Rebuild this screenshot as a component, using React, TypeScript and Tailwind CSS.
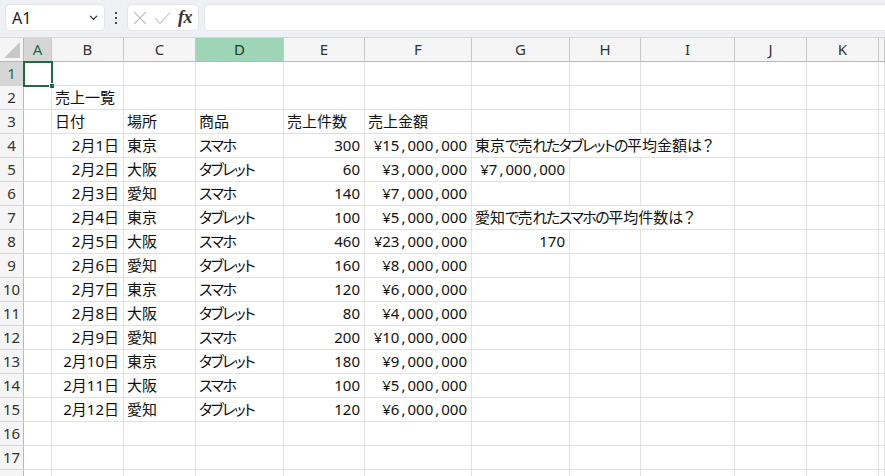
import React from 'react';

const COLS = ['A', 'B', 'C', 'D', 'E', 'F', 'G', 'H', 'I', 'J', 'K', ''];

type Row = { b?: string; c?: string; d?: string; e?: string; f?: string; g?: string; gRight?: boolean; overflow?: boolean };

const DATA: [string, string, string, string, string][] = [
  ['2月1日', '東京', 'スマホ', '300', '¥15,000,000'],
  ['2月2日', '大阪', 'タブレット', '60', '¥3,000,000'],
  ['2月3日', '愛知', 'スマホ', '140', '¥7,000,000'],
  ['2月4日', '東京', 'タブレット', '100', '¥5,000,000'],
  ['2月5日', '大阪', 'スマホ', '460', '¥23,000,000'],
  ['2月6日', '愛知', 'タブレット', '160', '¥8,000,000'],
  ['2月7日', '東京', 'スマホ', '120', '¥6,000,000'],
  ['2月8日', '大阪', 'タブレット', '80', '¥4,000,000'],
  ['2月9日', '愛知', 'スマホ', '200', '¥10,000,000'],
  ['2月10日', '東京', 'タブレット', '180', '¥9,000,000'],
  ['2月11日', '大阪', 'スマホ', '100', '¥5,000,000'],
  ['2月12日', '愛知', 'タブレット', '120', '¥6,000,000']
];

// G列のメモ（行番号をキーに）
const NOTES: Record<number, { g: string; right?: boolean; overflow?: boolean }> = {
  4: { g: '東京で売れたタブレットの平均金額は？', overflow: true },
  5: { g: '¥7,000,000', right: true },
  7: { g: '愛知で売れたスマホの平均件数は？', overflow: true },
  8: { g: '170', right: true }
};

function buildRows(): Row[] {
  const rows: Row[] = [];
  for (let i = 1; i <= 18; i++) {
    const r: Row = {};
    if (i === 2) r.b = '売上一覧';
    if (i === 3) {
      r.b = '日付';
      r.c = '場所';
      r.d = '商品';
      r.e = '売上件数';
      r.f = '売上金額';
    }
    if (i >= 4 && i <= 15) {
      const [b, c, d, e, f] = DATA[i - 4];
      Object.assign(r, { b, c, d, e, f });
    }
    const note = NOTES[i];
    if (note) {
      r.g = note.g;
      r.gRight = note.right;
      r.overflow = note.overflow;
    }
    rows.push(r);
  }
  return rows;
}

// かなは詰め気味、カンマは広めに（Excelの游ゴシック風）
function renderText(t: string) {
  return t.split(/([\u3040-\u30ff]+|,|？)/).map((part, i) => {
    if (!part) return null;
    if (part === ',') {
      return (
        <span key={i} className="mx-[2px]">
          ,
        </span>
      );
    }
    if (part === '？') {
      return (
        <span key={i} className="[font-feature-settings:normal]">
          ？
        </span>
      );
    }
    if (/^[\u3040-\u30ff]+$/.test(part)) {
      return (
        <span key={i} className="tracking-[-1.5px]">
          {part}
        </span>
      );
    }
    return <React.Fragment key={i}>{part}</React.Fragment>;
  });
}

function Cell({ text, right, noBorder }: { text?: string; right?: boolean; noBorder?: boolean }) {
  return (
    <div
      className={`relative h-[24px] flex items-center border-b border-[#e1e1e1] ${noBorder ? '' : 'border-r'} ${
        right ? 'justify-end pr-[4px]' : 'justify-start pl-[3px]'
      }`}>
      {text && <span className="whitespace-nowrap leading-none relative z-10">{renderText(text)}</span>}
    </div>
  );
}

function FormulaBar() {
  return (
    <div className="h-[38px] bg-[#eef0f3] border-b border-[#d6d8db] flex items-start pt-[4px] pl-[5px]">
      {/* 名前ボックス */}
      <div className="w-[100px] h-[27px] bg-white rounded-[5px] border border-[#e3e5e8] flex items-center justify-between pl-[6px] pr-[5px]">
        <span className="text-[16px] text-[#222] font-['Noto_Sans',sans-serif]">A1</span>
        <svg width="11" height="11" viewBox="0 0 12 12">
          <path d="M2.5 4.5 L6 8 L9.5 4.5" fill="none" stroke="#333" strokeWidth="1.4" strokeLinecap="round" strokeLinejoin="round" />
        </svg>
      </div>
      <div className="w-[22px] h-[27px] flex flex-col items-center justify-center gap-[3px]">
        <span className="block w-[2px] h-[2px] bg-[#444]" />
        <span className="block w-[2px] h-[2px] bg-[#444]" />
        <span className="block w-[2px] h-[2px] bg-[#444]" />
      </div>
      {/* ×✓fx */}
      <div className="w-[72px] h-[27px] bg-white rounded-[5px] border border-[#e3e5e8] flex items-center pl-[5px] gap-[7px]">
        <svg width="14" height="14" viewBox="0 0 14 14">
          <path d="M1 1 L13 13 M13 1 L1 13" stroke="#bdbdbd" strokeWidth="1.1" />
        </svg>
        <svg width="17" height="14" viewBox="0 0 17 14">
          <path d="M1 7 L6 12.5 L16 1.5" fill="none" stroke="#bdbdbd" strokeWidth="1.1" />
        </svg>
        <span className="italic font-semibold text-[18px] text-[#333] font-['Liberation_Serif',serif] leading-none tracking-[-0.5px] -mt-[2px]">fx</span>
      </div>
      <div className="ml-[5px] flex-1 h-[27px] bg-white rounded-l-[5px] border border-r-0 border-[#e3e5e8]" />
    </div>
  );
}

export default function App() {
  const rows = buildRows();
  return (
    <div className="w-[885px] h-[476px] overflow-hidden bg-white text-[15px] text-[#111] font-['Noto_Sans','Noto_Sans_CJK_JP',sans-serif] [font-feature-settings:'palt']">
      <FormulaBar />
      <div className="grid grid-cols-[24px_28px_72px_72px_88px_81px_107px_98px_71px_94px_72px_72px_1fr]">
        {/* 列見出し */}
        <div className="h-[24px] bg-[#f5f5f5] border-r border-b border-[#b9b9b9] relative">
          <svg className="absolute right-[3px] bottom-[3px]" width="16" height="16" viewBox="0 0 16 16">
            <path d="M16 0 L16 16 L0 16 Z" fill="#c8c8c8" />
          </svg>
        </div>
        {COLS.map((c) => (
          <div
            key={c || 'x'}
            className={`h-[24px] flex items-center justify-center text-[15px] font-['Noto_Sans',sans-serif] border-r border-b border-r-[#c8c8c8] border-b-[#b9b9b9] ${
              c === 'A' ? 'bg-[#d6d6d6] text-[#1e6b41]' : c === 'D' ? 'bg-[#9fd5b7] text-[#1b3a28]' : 'bg-[#f5f5f5] text-[#333]'
            }`}>
            {c}
          </div>
        ))}

        {rows.map((r, idx) => {
          const n = idx + 1;
          return (
            <React.Fragment key={n}>
              <div
                className={`h-[24px] flex items-center justify-center text-[15px] font-['Noto_Sans',sans-serif] border-r border-b border-r-[#b9b9b9] border-b-[#d6d6d6] ${
                  n === 1 ? 'bg-[#d6d6d6] text-[#1e6b41]' : 'bg-[#f5f5f5] text-[#333]'
                }`}>
                {n}
              </div>
              {/* A */}
              <div className="relative h-[24px] border-r border-b border-[#e1e1e1]">
                {n === 1 && (
                  <div className="absolute -left-[1px] -top-[1px] w-[30px] h-[26px] border-2 border-[#1e6b41] z-20">
                    <div className="absolute -right-[4px] -bottom-[4px] w-[6px] h-[6px] bg-[#1e6b41] border border-white" />
                  </div>
                )}
              </div>
              <Cell text={r.b} right={n >= 4 && n <= 15} />
              <Cell text={r.c} />
              <Cell text={r.d} />
              <Cell text={r.e} right={n >= 4} />
              <Cell text={r.f} right={n >= 4} />
              <Cell text={r.g} right={r.gRight} noBorder={r.overflow} />
              <Cell noBorder={r.overflow} />
              <Cell />
              <Cell />
              <Cell />
              <Cell />
            </React.Fragment>
          );
        })}
      </div>
    </div>
  );
}
